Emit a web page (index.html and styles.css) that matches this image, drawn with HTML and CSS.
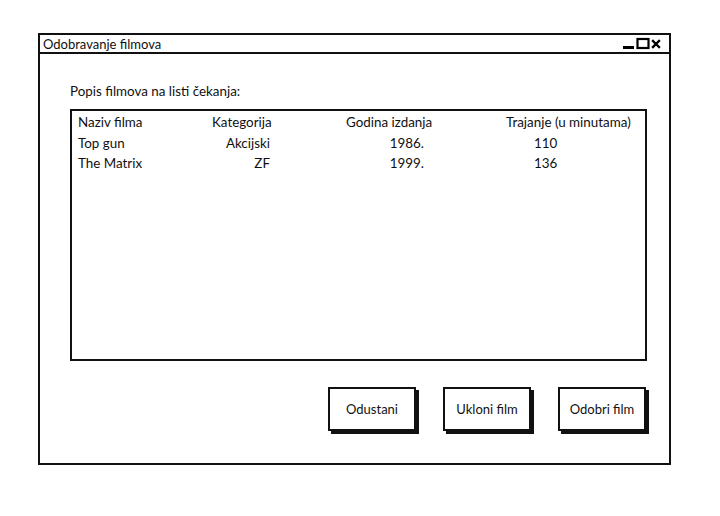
FILE: index.html
```html
<!DOCTYPE html>
<html lang="hr">
<head>
<meta charset="utf-8">
<title>Odobravanje filmova</title>
<link rel="stylesheet" href="styles.css">
</head>
<body>
<div class="window">
  <div class="titlebar">
    <span class="title">Odobravanje filmova</span>
    <div class="controls">
      <svg width="42" height="14" viewBox="0 0 42 14">
        <rect x="1" y="9" width="11" height="3" fill="#000"/>
        <rect x="15.5" y="2" width="11" height="9" fill="none" stroke="#000" stroke-width="2.2"/>
        <path d="M31 4 L37 10 M37 4 L31 10" stroke="#000" stroke-width="2.4" stroke-linecap="square"/>
      </svg>
    </div>
  </div>
  <div class="content">
    <p class="label">Popis filmova na listi čekanja:</p>
    <div class="table">
      <div class="row head">
        <span class="c1">Naziv filma</span>
        <span class="c2">Kategorija</span>
        <span class="c3">Godina izdanja</span>
        <span class="c4">Trajanje (u minutama)</span>
      </div>
      <div class="row">
        <span class="c1">Top gun</span>
        <span class="c2 num2">Akcijski</span>
        <span class="c3 num3">1986.</span>
        <span class="c4 num4">110</span>
      </div>
      <div class="row">
        <span class="c1">The Matrix</span>
        <span class="c2 num2">ZF</span>
        <span class="c3 num3">1999.</span>
        <span class="c4 num4">136</span>
      </div>
    </div>
    <div class="actions">
      <button class="btn">Odustani</button>
      <button class="btn">Ukloni film</button>
      <button class="btn">Odobri film</button>
    </div>
  </div>
</div>
</body>
</html>
```

FILE: styles.css
```css
* { box-sizing: border-box; }
html, body { margin: 0; padding: 0; background: #fff; }
body {
  font-family: Lato, "Open Sans", sans-serif;
  font-size: 13px;
  color: #111;
}
.window {
  margin: 33px 0 0 38px;
  width: 633px;
  height: 432px;
  border: 2px solid #111;
  display: flex;
  flex-direction: column;
}
.titlebar {
  height: 19px;
  border-bottom: 2px solid #111;
  display: flex;
  align-items: center;
  justify-content: space-between;
  padding: 0 5px 0 3px;
}
.title { font-size: 13px; line-height: 16px; }
.controls { display: flex; align-items: center; }
.controls svg { display: block; }
.content {
  flex: 1;
  padding: 0 22px 0 30px;
  display: flex;
  flex-direction: column;
}
.label {
  margin: 29px 0 0 0;
  line-height: 16px;
  font-size: 13.4px;
}
.table {
  margin-top: 10px;
  height: 252px;
  border: 2px solid #111;
  padding: 1px 0 0 6px;
  font-size: 13.4px;
}
.row {
  display: grid;
  grid-template-columns: 134px 134px 160px 1fr;
  height: 20.5px;
  align-items: center;
}
.num2 { text-align: right; padding-right: 76px; }
.num3 { text-align: right; padding-right: 82px; }
.num4 { padding-left: 28px; }
.actions {
  margin-top: 26px;
  padding-right: 1px;
  display: flex;
  justify-content: flex-end;
  gap: 27px;
}
.btn {
  width: 88px;
  height: 44px;
  border: 2px solid #111;
  background: #fff;
  box-shadow: 3px 3px 0 #111;
  font-family: inherit;
  font-size: 13px;
  color: #111;
  padding: 0;
}
```
